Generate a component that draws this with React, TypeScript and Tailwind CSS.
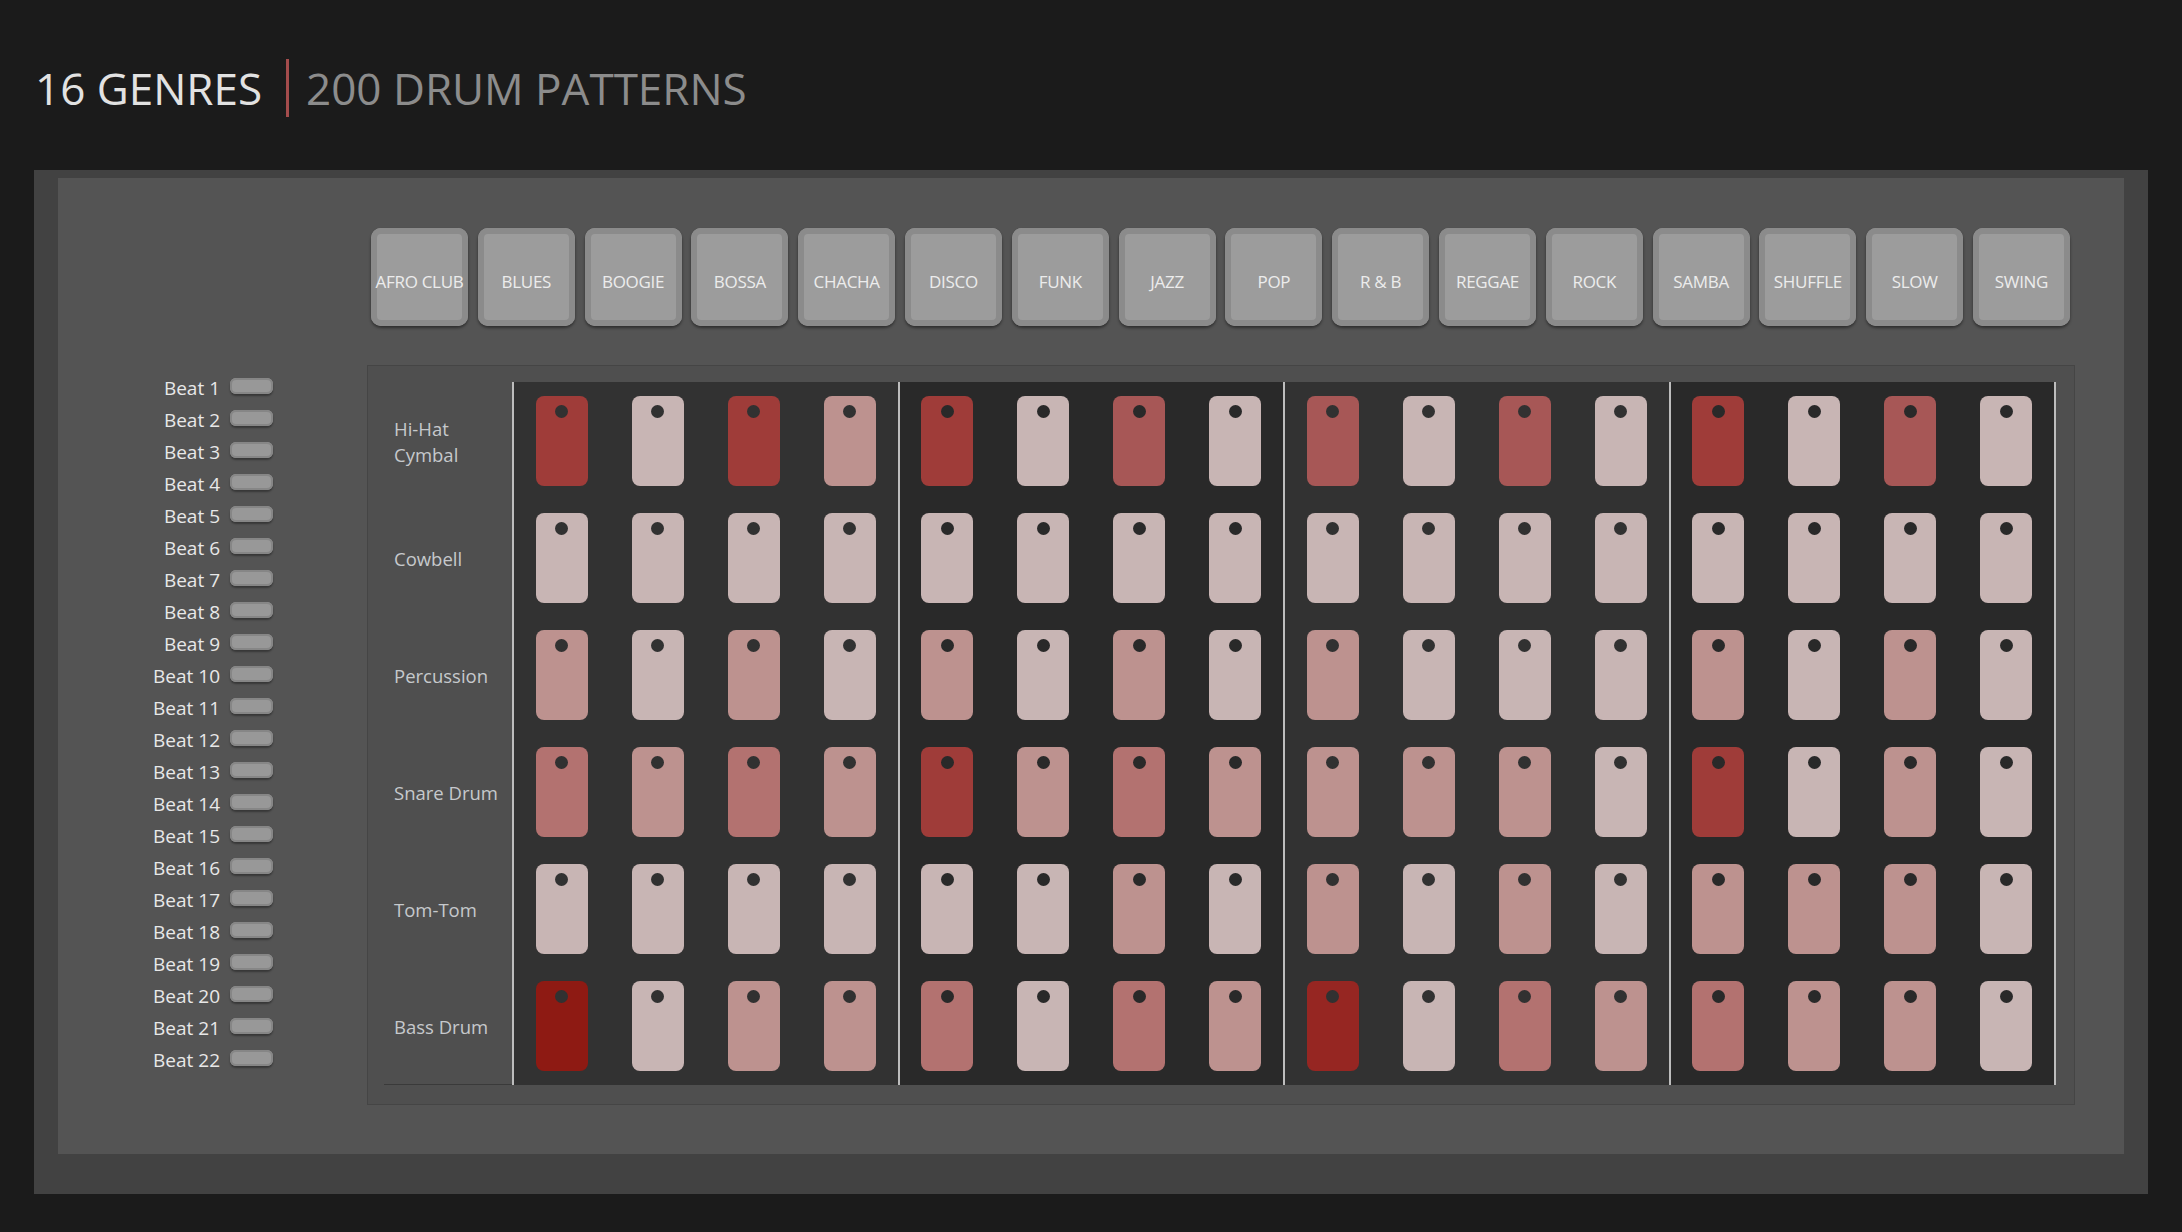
import React from 'react';

const genres = [
  'AFRO CLUB', 'BLUES', 'BOOGIE', 'BOSSA', 'CHACHA', 'DISCO', 'FUNK', 'JAZZ',
  'POP', 'R & B', 'REGGAE', 'ROCK', 'SAMBA', 'SHUFFLE', 'SLOW', 'SWING',
];

const beats = Array.from({ length: 22 }, (_, i) => `Beat ${i + 1}`);

const instruments = [['Hi-Hat', 'Cymbal'], ['Cowbell'], ['Percussion'], ['Snare Drum'], ['Tom-Tom'], ['Bass Drum']];

// one letter per step, darkest (F) to lightest (E)
const pattern = [
  'AEADAEBEBEBEAEBE',
  'EEEEEEEEEEEEEEEE',
  'DEDEDEDEDEEEDEDE',
  'CDCDADCDDDDEAEDE',
  'EEEEEEDEDEDEDDDE',
  'FEDDCECDGECDCDDE',
];

const padColor: Record<string, string> = {
  F: 'bg-[#8e1a13]',
  G: 'bg-[#962622]',
  A: 'bg-[#9f3c39]',
  B: 'bg-[#a75756]',
  C: 'bg-[#b37270]',
  D: 'bg-[#bd928f]',
  E: 'bg-[#c8b5b4]',
};

const Section: React.FC<{ index: number }> = ({ index }) => {
  const dark = index % 2 === 1;
  const last = index === 3;
  return (
    <div
      className={`flex-1 grid grid-cols-4 grid-rows-6 border-l-2 border-[#bdbdbd] ${last ? 'border-r-2' : ''} ${dark ? 'bg-[#292929]' : 'bg-[#323232]'}`}
    >
      {pattern.map((row, r) =>
        row
          .slice(index * 4, index * 4 + 4)
          .split('')
          .map((v, c) => (
            <div key={`${r}-${c}`} className="flex items-center justify-center">
              <div className={`w-[52px] h-[90px] rounded-[8px] flex justify-center pt-[9px] ${padColor[v]}`}>
                <div className={`w-[13px] h-[13px] rounded-full ${dark ? 'bg-[#292929]' : 'bg-[#313131]'}`} />
              </div>
            </div>
          ))
      )}
    </div>
  );
};

export default function App() {
  return (
    <div className="w-[2182px] h-[1232px] overflow-hidden bg-[#1b1b1b] font-['Open_Sans',sans-serif]">
      {/* title */}
      <div className="h-[170px] pl-[35px] pt-[59px]">
        <div className="flex items-center h-[58px] text-[44px] leading-none">
          <span className="text-[#e2e2e2]">16 GENRES</span>
          <div className="w-[3px] h-[58px] bg-[#a44c4c] ml-[24px] mr-[17px]" />
          <span className="text-[#8c8c8c]">200 DRUM PATTERNS</span>
        </div>
      </div>

      <div className="w-[2114px] ml-[34px] bg-[#424242] pt-[8px] px-[24px] pb-[40px]">
        <div className="bg-[#545454] flex flex-col pt-[50px] pb-[49px]">
          {/* genre buttons */}
          <div className="flex gap-[9.8px] ml-[313px] h-[98px]">
            {genres.map((g) => (
              <div
                key={g}
                className="w-[97px] h-[98px] rounded-[10px] bg-[#9c9c9c] shadow-[inset_0_0_0_6px_#8b8b8b,0_2px_3px_rgba(0,0,0,0.45)] flex items-center justify-center pt-[9px] text-[17px] text-[#ececec] whitespace-nowrap tracking-[-0.3px]"
              >
                {g}
              </div>
            ))}
          </div>

          <div className="flex mt-[39px]">
            {/* beat selector */}
            <div className="w-[215px] pt-[7px] flex flex-col">
              {beats.map((b) => (
                <div key={b} className="h-[32px] flex items-center justify-end gap-[10px]">
                  <span className="text-[19px] text-[#e8e8e8] leading-none">{b}</span>
                  <div className="w-[43px] h-[16px] rounded-[6px] bg-[#989898] shadow-[inset_0_0_0_2px_#868686,0_2px_2px_rgba(0,0,0,0.35)] mb-[4px]" />
                </div>
              ))}
            </div>

            {/* sequencer */}
            <div className="ml-[94px] w-[1708px] h-[740px] border border-[#454545] bg-[#4f4f4f] flex pt-[16px] pr-[18px] pb-[19px]">
              <div className="w-[144px] flex flex-col">
                {instruments.map((lines, i) => (
                  <div
                    key={i}
                    className="flex-1 flex flex-col justify-center pl-[26px] pt-[2px] text-[18.5px] leading-[26px] text-[#c6c9cc]"
                  >
                    {lines.map((l) => (
                      <span key={l}>{l}</span>
                    ))}
                  </div>
                ))}
                <div className="ml-[16px] border-b border-[#3a3a3a]" />
              </div>
              <div className="flex-1 flex">
                {[0, 1, 2, 3].map((i) => (
                  <Section key={i} index={i} />
                ))}
              </div>
            </div>
          </div>
        </div>
      </div>
    </div>
  );
}
